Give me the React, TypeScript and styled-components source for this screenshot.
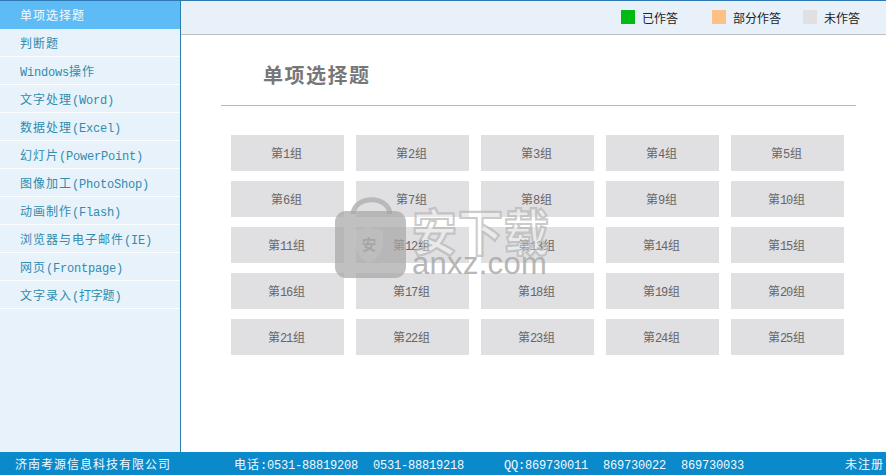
import styled, { createGlobalStyle } from "styled-components";

const GlobalStyle = createGlobalStyle`
  html, body {
    margin: 0;
    padding: 0;
    background: #fff;
  }
  * {
    box-sizing: border-box;
  }
`;

const CJK = `"Noto Sans CJK SC", "Liberation Sans", sans-serif`;
const MONO = `"Liberation Mono", "Noto Sans CJK SC", monospace`;

const Page = styled.div`
  position: relative;
  width: 886px;
  height: 475px;
  display: flex;
  flex-direction: column;
  overflow: hidden;
  border-top: 1px solid #2f78b4;
  font-family: ${CJK};
  font-size: 12px;
`;

const Main = styled.div`
  flex: 1;
  min-height: 0;
  display: flex;
`;

const Sidebar = styled.nav`
  width: 181px;
  flex: none;
  background: #e8f2fa;
  border-right: 1px solid #2a7fae;
`;

const MenuItem = styled.div<{ $active?: boolean }>`
  height: 28px;
  padding-left: 20px;
  line-height: 27px;
  letter-spacing: 1px;
  white-space: nowrap;
  border-bottom: 1px solid ${(p) => (p.$active ? "#5dbcf6" : "#fbfdfe")};
  background: ${(p) => (p.$active ? "#5dbcf6" : "#e8f2fa")};
  color: ${(p) => (p.$active ? "#f4fbff" : "#2f8cb0")};
`;

const Latin = styled.span`
  font-family: ${MONO};
  line-height: 1;
  letter-spacing: -0.2px;
`;

const Content = styled.div`
  flex: 1;
  min-width: 0;
  display: flex;
  flex-direction: column;
`;

const Legend = styled.div`
  height: 34px;
  flex: none;
  display: grid;
  grid-template-columns: 91px 91px 83px;
  justify-content: end;
  align-items: center;
  background: #e8f1f9;
  border-bottom: 1px solid #bcc0c4;
  padding-bottom: 1px;
`;

const LegendItem = styled.div`
  display: flex;
  align-items: center;
  gap: 7px;
  color: #222;
`;

const Swatch = styled.span<{ $color: string }>`
  width: 14px;
  height: 14px;
  background: ${(p) => p.$color};
`;

const Body = styled.div`
  flex: 1;
  padding: 0 30px 0 40px;
`;

const Title = styled.h1`
  margin: 0;
  height: 71px;
  padding: 25px 0 0 42px;
  font-size: 20px;
  line-height: 30px;
  letter-spacing: 1.5px;
  font-weight: 700;
  color: #777;
  border-bottom: 1px solid #b9b9bd;
`;

const Groups = styled.div`
  margin: 29px 0 0 10px;
  display: grid;
  grid-template-columns: repeat(5, 113px);
  grid-auto-rows: 36px;
  column-gap: 12px;
  row-gap: 10px;
`;

const Group = styled.button`
  border: 0;
  padding: 0 2px 0 0;
  background: #e0dfe2;
  color: #666;
  font-family: ${CJK};
  font-size: 12px;
`;

const Digits = styled.span`
  font-family: ${MONO};
  letter-spacing: -1.2px;
  margin-right: 1px;
`;

const Footer = styled.footer`
  height: 23px;
  flex: none;
  display: flex;
  align-items: baseline;
  line-height: 23px;
  background: #0a8aca;
  color: #f2f9fd;
  letter-spacing: 1px;
  white-space: nowrap;
`;

const Company = styled.div`
  width: 234px;
  padding-left: 15px;
`;

const Phones = styled.div`
  width: 270px;
  display: flex;
  align-items: baseline;
  gap: 15px;
`;

const QQ = styled.div`
  display: flex;
  align-items: baseline;
  gap: 15px;
`;

const Status = styled.div`
  margin-left: auto;
  padding-right: 2px;
`;

const Watermark = styled.div`
  position: absolute;
  left: 335px;
  top: 195px;
  display: flex;
  gap: 6px;
  pointer-events: none;
`;

const WatermarkText = styled.div`
  display: flex;
  flex-direction: column;
  padding-top: 6px;
`;

const WatermarkCn = styled.div`
  font-family: ${CJK};
  font-size: 45px;
  line-height: 50px;
  font-weight: 700;
  letter-spacing: 1px;
  color: rgba(255, 255, 255, 0.35);
  -webkit-text-stroke: 2px rgba(180, 180, 180, 0.7);
  transform: scaleY(1.12);
  transform-origin: top;
`;

const WatermarkEn = styled.div`
  font-family: "Liberation Sans", sans-serif;
  font-size: 31px;
  line-height: 24px;
  letter-spacing: 0.3px;
  color: rgba(165, 165, 165, 0.8);
`;

const menu: React.ReactNode[] = [
  "单项选择题",
  "判断题",
  <><Latin>Windows</Latin>操作</>,
  <>文字处理<Latin>(Word)</Latin></>,
  <>数据处理<Latin>(Excel)</Latin></>,
  <>幻灯片<Latin>(PowerPoint)</Latin></>,
  <>图像加工<Latin>(PhotoShop)</Latin></>,
  <>动画制作<Latin>(Flash)</Latin></>,
  <>浏览器与电子邮件<Latin>(IE)</Latin></>,
  <>网页<Latin>(Frontpage)</Latin></>,
  <>文字录入<Latin>(打字题)</Latin></>,
];

const legend = [
  { label: "已作答", color: "#00bb11" },
  { label: "部分作答", color: "#ffc183" },
  { label: "未作答", color: "#e0dfe2" },
];

const groups = Array.from({ length: 25 }, (_, i) => i + 1);

function BagLogo() {
  return (
    <svg width="71" height="82" viewBox="0 0 71 82">
      <path d="M18 18 C20 -1 53 -1 55 18" fill="none" stroke="rgba(175,175,175,0.8)" strokeWidth="5" />
      <rect x="0" y="15" width="71" height="67" rx="11" fill="rgba(165,165,165,0.7)" />
      <path d="M20 34 Q29 34 34 30 Q39 34 48 34 L48 50 Q46 61 34 67 Q22 61 20 50 Z" fill="rgba(195,195,195,0.5)" />
      <text x="34" y="54" textAnchor="middle" fontSize="15" fontWeight="700" fontFamily="Noto Sans CJK SC" fill="rgba(165,165,165,0.95)">安</text>
    </svg>
  );
}

export default function App() {
  return (
    <Page>
      <GlobalStyle />
      <Main>
        <Sidebar>
          {menu.map((item, i) => (
            <MenuItem key={i} $active={i === 0}>{item}</MenuItem>
          ))}
        </Sidebar>
        <Content>
          <Legend>
            {legend.map((l) => (
              <LegendItem key={l.label}>
                <Swatch $color={l.color} />
                {l.label}
              </LegendItem>
            ))}
          </Legend>
          <Body>
            <Title>单项选择题</Title>
            <Groups>
              {groups.map((n) => (
                <Group key={n}>第<Digits>{n}</Digits>组</Group>
              ))}
            </Groups>
          </Body>
        </Content>
      </Main>
      <Footer>
        <Company>济南考源信息科技有限公司</Company>
        <Phones>
          <span>电话<Latin>:0531-88819208</Latin></span>
          <Latin>0531-88819218</Latin>
        </Phones>
        <QQ>
          <Latin>QQ:869730011</Latin>
          <Latin>869730022</Latin>
          <Latin>869730033</Latin>
        </QQ>
        <Status>未注册</Status>
      </Footer>
      <Watermark>
        <BagLogo />
        <WatermarkText>
          <WatermarkCn>安下载</WatermarkCn>
          <WatermarkEn>anxz.com</WatermarkEn>
        </WatermarkText>
      </Watermark>
    </Page>
  );
}
